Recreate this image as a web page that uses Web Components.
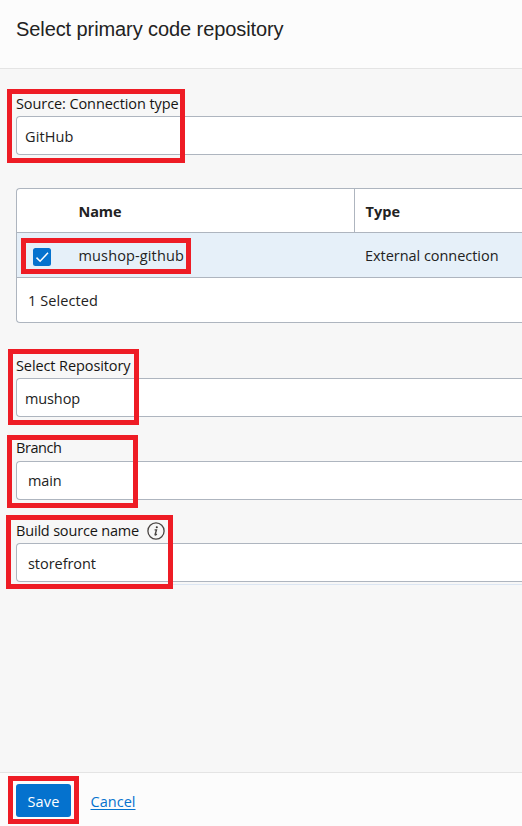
<!DOCTYPE html>
<html lang="en">
<head>
<meta charset="utf-8">
<title>Select primary code repository</title>
<style>
html, body { margin: 0; height: 100%; }
body { font-family: "Open Sans", "Noto Sans", sans-serif; font-size: 14.5px; color: #222; background: #f7f7f7; overflow: hidden; }
</style>
</head>
<body>
<repo-dialog></repo-dialog>
<script>
const define = (name, html, setup) => customElements.define(name, class extends HTMLElement {
  constructor() {
    super();
    this.attachShadow({ mode: 'open' }).innerHTML = html;
  }
  connectedCallback() { if (setup) setup.call(this); }
});

// A single line of text whose tracking is adjusted to a given width.
define('fit-text', `<style>
  :host { display: inline-block; white-space: nowrap; }
</style><slot></slot>`, function () {
  const width = Number(this.getAttribute('width'));
  const natural = this.getBoundingClientRect().width;
  const count = this.textContent.length;
  if (width && natural) this.style.letterSpacing = ((width - natural) / count) + 'px';
});

// Red outline laid over its nearest positioned ancestor.
define('mark-box', `<style>
  :host { position: absolute; box-sizing: border-box; border: 5px solid #ee1c25; pointer-events: none; z-index: 2;
    left: var(--l); top: var(--t); width: var(--w); height: var(--h); }
</style>`);

define('info-icon', `<style>:host { display: block; width: 18px; height: 18px; } svg { display: block; }</style>
<svg width="18" height="18" viewBox="0 0 18 18" fill="none" stroke="#4a4644">
  <circle cx="9" cy="9" r="8.1" stroke-width="1.3"/>
  <circle cx="9.8" cy="5.2" r="1.05" fill="#3a3634" stroke="none"/>
  <path d="M7.6 7.8h1.9L8.1 12.5q-.1.6.5.4l1.3-.8" stroke-width="1.35"/>
</svg>`);

define('check-box', `<style>
  :host { display: block; width: 18px; height: 18px; border-radius: 2.5px; background: #0572ce; } svg { display: block; }
</style><svg width="18" height="18" viewBox="0 0 18 18" fill="none" stroke="#fff" stroke-width="1.5"><path d="M3.5 9.6L7.1 13.2L15 4.8"/></svg>`);

define('form-field', `<style>
  :host { display: block; position: relative; height: 65px; }
  .label { display: flex; align-items: center; box-sizing: border-box; height: 26px; padding-bottom: var(--lift, 0px); gap: 8px; color: #161513; }
  .label ::slotted(info-icon) { margin-top: 1px; }
  .box { box-sizing: border-box; height: 39px; border: 1px solid #aeb5bf; border-right: 0; border-radius: 4px 0 0 4px; background: #fff;
    display: flex; align-items: center; padding: 2px 0 var(--lift, 0px) var(--inset, 8px); }
</style>
<div class="label"><slot name="label"></slot><slot name="icon"></slot></div>
<div class="box"><slot></slot></div>
<slot name="mark"></slot>`);

define('connection-table', `<style>
  :host { display: block; box-sizing: border-box; height: 135px; border: 1px solid #aeb5bf; border-right: 0; border-radius: 4px 0 0 4px; background: #fff; overflow: hidden; }
  .row { display: grid; grid-template-columns: 61.5px 275.5px 1fr; height: 43px; border-bottom: 1px solid #aeb5bf; align-items: stretch; }
  .row > div { display: flex; align-items: center; padding-top: 2px; }
  .head { font-weight: 700; }
  .head .type { border-left: 1px solid #aeb5bf; padding-left: 10.5px; }
  .body { position: relative; height: 44px; background: #e6f0f9; }
  .body > div { padding-top: 0; }
  .body .type { padding-left: 11px; }
  .body .check { padding: 4px 0 0 16px; }
  .foot { display: flex; align-items: center; height: 44px; padding: 0 0 0 11px; box-sizing: border-box; }
</style>
<div class="row head"><div></div><div><fit-text width="43">Name</fit-text></div><div class="type"><fit-text width="34.5">Type</fit-text></div></div>
<div class="row body"><div class="check"><check-box></check-box></div><div><fit-text width="105.5">mushop-github</fit-text></div><div class="type"><fit-text width="133.5">External connection</fit-text></div>
<mark-box style="--l:4px;--t:5px;--w:170px;--h:36px"></mark-box></div>
<div class="foot"><fit-text width="70">1 Selected</fit-text></div>`);

define('dialog-header', `<style>
  :host { display: flex; align-items: center; box-sizing: border-box; height: 69px; padding: 0 16px 11px; background: #fcfcfc; border-bottom: 1px solid #e4e4e4;
    font: 20px/24px "Liberation Sans", Arial, sans-serif; color: #222; }
</style><slot></slot>`);

define('dialog-footer', `<style>
  :host { position: relative; display: flex; align-items: flex-start; gap: 19.5px; box-sizing: border-box; height: 54px; padding: 11px 16px 0; background: #fcfcfc; border-top: 1px solid #e4e4e4; }
  button { width: 55px; height: 33px; padding: 2px 0 0; border: 0; border-radius: 3px; background: #0572ce; color: #fff; font: inherit; }
  a { color: #0572ce; line-height: 35px; text-decoration: none; }
  a fit-text { text-decoration: underline; text-underline-offset: 2px; text-decoration-thickness: 1px; }
</style>
<button><fit-text width="32">Save</fit-text></button><a href="#"><fit-text width="45">Cancel</fit-text></a>
<mark-box style="--l:8px;--t:3px;--w:71px;--h:48px"></mark-box>`);

define('repo-dialog', `<style>
  :host { display: flex; flex-direction: column; height: 826px; }
  main { flex: 1; padding: 21px 0 0 16px; }
  connection-table { margin: 33px 0 29px; }
  .branch { margin: 18px 0 17px; height: 65px; --lift: 2px; }
  .rule { height: 1px; margin-top: 2px; background: #dce6f3; }
</style>
<dialog-header><fit-text width="267.5">Select primary code repository</fit-text></dialog-header>
<main>
  <form-field><fit-text slot="label" width="162.5">Source: Connection type</fit-text><fit-text width="48.5">GitHub</fit-text>
    <mark-box slot="mark" style="--l:-9px;--t:-1px;--w:178px;--h:74px"></mark-box></form-field>
  <connection-table></connection-table>
  <form-field><fit-text slot="label" width="114.5">Select Repository</fit-text><fit-text width="55">mushop</fit-text>
    <mark-box slot="mark" style="--l:-8px;--t:-3px;--w:131px;--h:76px"></mark-box></form-field>
  <form-field class="branch" style="--inset:11px"><fit-text slot="label" width="45.5">Branch</fit-text><fit-text width="33.5">main</fit-text>
    <mark-box slot="mark" style="--l:-9px;--t:0px;--w:131px;--h:73px"></mark-box></form-field>
  <form-field style="--inset:11px"><fit-text slot="label" width="123">Build source name</fit-text><info-icon slot="icon"></info-icon><fit-text width="68">storefront</fit-text>
    <mark-box slot="mark" style="--l:-10px;--t:-2px;--w:167px;--h:74px"></mark-box></form-field>
  <div class="rule"></div>
</main>
<dialog-footer></dialog-footer>`);
</script>
</body>
</html>
